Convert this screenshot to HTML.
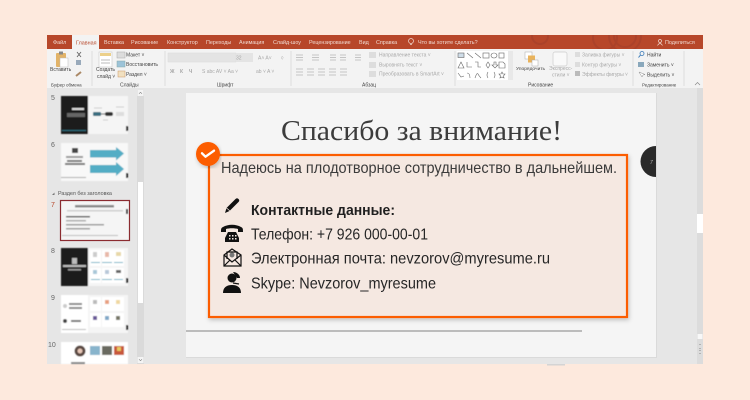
<!DOCTYPE html>
<html><head><meta charset="utf-8"><style>
html,body{margin:0;padding:0;background:#fde9dd;width:750px;height:400px;overflow:hidden}
svg{display:block}
text{font-family:"Liberation Sans","DejaVu Sans",sans-serif}
.r{font-size:5px;fill:#444}
.g{font-size:5px;fill:#a8a8a8}
.t{font-size:5.4px;fill:#f0d9d0}
.m{font-size:15.6px;fill:#262626}
</style></head><body>
<svg width="750" height="400" viewBox="0 0 750 400" xmlns="http://www.w3.org/2000/svg">
<defs><filter id="s" x="-5%" y="-5%" width="110%" height="115%"><feDropShadow dx="1" dy="2" stdDeviation="2" flood-color="#000" flood-opacity=".22"/></filter>
<filter id="bl"><feGaussianBlur stdDeviation=".35"/></filter>
<filter id="bt"><feGaussianBlur stdDeviation=".5"/></filter>
<clipPath id="cb"><rect x="47" y="35" width="656" height="14"/></clipPath></defs>
<rect width="750" height="400" fill="#fde9dd"/>
<!-- window -->
<rect x="47" y="35" width="656" height="329" fill="#e6e6e6"/>
<rect x="47" y="35" width="656" height="14" fill="#b7472a"/>
<g clip-path="url(#cb)" fill="none" stroke="#a8412a" stroke-width="2" opacity=".75"><circle cx="605" cy="38" r="12"/><circle cx="625" cy="36" r="16"/><circle cx="625" cy="36" r="11"/><circle cx="540" cy="36" r="8"/></g>
<rect x="47" y="49" width="656" height="39" fill="#f3f3f3"/>
<rect x="72" y="35" width="27" height="15" fill="#f3f3f3"/>
<g filter="url(#bl)">
<text class="t" x="53" y="44">Файл</text>
<text x="76" y="44.500" font-size="5.400" fill="#b7472a">Главная</text>
<text class="t" x="104" y="44">Вставка</text>
<text class="t" x="131" y="44">Рисование</text>
<text class="t" x="167" y="44">Конструктор</text>
<text class="t" x="206" y="44">Переходы</text>
<text class="t" x="239" y="44">Анимация</text>
<text class="t" x="273" y="44">Слайд-шоу</text>
<text class="t" x="309" y="44">Рецензирование</text>
<text class="t" x="359" y="44">Вид</text>
<text class="t" x="376" y="44">Справка</text>
<text class="t" x="418" y="44">Что вы хотите сделать?</text>
<text class="t" x="665" y="44">Поделиться</text>
<g fill="none" stroke="#f0d9d0" stroke-width=".7"><circle cx="411" cy="41" r="2.500"/><path d="M410 44.500h2"/><circle cx="660" cy="41" r="1.500"/><path d="M657.500 45.500q2.500-4 5 0"/></g>
<!-- ribbon separators -->
<g stroke="#d8d8d8" stroke-width=".8"><path d="M92 51v35M165 51v35M291 51v35M455 51v35M633 51v35M684 51v35"/></g>
<!-- clipboard -->
<rect x="56" y="53" width="10" height="14" rx="1" fill="#e2b368"/><rect x="60" y="58" width="8" height="9" fill="#fff" stroke="#bbb" stroke-width=".5"/><rect x="59" y="51.500" width="4" height="3" fill="#888"/>
<text class="r" x="50" y="71">Вставить</text>
<path d="M77 52l4 5M81 52l-4 5" stroke="#666" stroke-width=".9"/><rect x="76" y="60" width="5" height="5" fill="#9ab"/><path d="M76 76l5-4" stroke="#a86" stroke-width="2"/>
<text class="r" x="51" y="86.500" style="font-size:4.500px">Буфер обмена</text>
<!-- slides -->
<rect x="99" y="52" width="13" height="15" fill="#fff" stroke="#c8c8c8" stroke-width=".6"/><rect x="100" y="53" width="11" height="3" fill="#ecd08a"/><path d="M101 60h9M101 63h9" stroke="#bbb"/>
<text class="r" x="96" y="71">Создать</text><text class="r" x="97" y="78">слайд ˅</text>
<rect x="117" y="52" width="8" height="6" fill="#dcdcdc" stroke="#aaa" stroke-width=".5"/><text class="r" x="126" y="56.500">Макет ˅</text>
<rect x="117" y="61" width="8" height="6" fill="#9cc3d8" stroke="#8aa" stroke-width=".5"/><text class="r" x="126" y="66">Восстановить</text>
<rect x="118" y="71" width="7" height="6" fill="#f1e0c0" stroke="#c96" stroke-width=".5"/><text class="r" x="126" y="76">Раздел ˅</text>
<text class="r" x="120" y="86.500">Слайды</text>
<!-- font -->
<rect x="168" y="53" width="68" height="9" fill="#e4e4e4" stroke="#dadada" stroke-width=".5"/><rect x="236" y="53" width="17" height="9" fill="#e4e4e4"/>
<text class="g" x="236" y="59.500">32</text>
<text class="g" x="258" y="59.500">A˄ A˅</text><text class="g" x="281" y="59.500">◊</text>
<text class="g" x="170" y="73" font-weight="bold" letter-spacing="5.500">ЖКЧ</text><text class="g" x="202" y="73">S abc AV ˅ Aa ˅</text><text class="g" x="256" y="73">ab ˅  A ˅</text>
<text class="r" x="217" y="86.500">Шрифт</text>
<!-- paragraph -->
<g stroke="#c4c4c4" stroke-width=".9"><path d="M296 55h7M296 57.500h7M296 60h7M312 55h7M312 57.500h7M312 60h7M330 55h6M330 57.500h6M330 60h6M340 55h6M340 57.500h6M340 60h6M355 55h6M355 57.500h6M355 60h6M296 69h7M296 72h7M296 75h7M307 69h7M307 72h7M307 75h7M318 69h7M318 72h7M318 75h7M329 69h7M329 72h7M329 75h7M340 69h7M340 72h7M340 75h7"/></g>
<text class="r" x="362" y="86.500">Абзац</text>
<text class="g" x="379" y="56.500">Направление текста ˅</text>
<text class="g" x="379" y="66.500">Выровнять текст ˅</text>
<text class="g" x="379" y="75.500">Преобразовать в SmartArt ˅</text>
<rect x="369" y="52" width="7" height="6" fill="#ddd"/><rect x="369" y="62" width="7" height="6" fill="#ddd"/><rect x="369" y="71" width="7" height="6" fill="#ddd"/>
<!-- shapes -->
<rect x="457" y="51" width="51" height="29" fill="#fff"/><rect x="508" y="51" width="5" height="29" fill="#e8e8e8"/>
<g fill="none" stroke="#666" stroke-width=".6">
<rect x="458" y="53" width="6" height="4.500" fill="#cfdde8"/><path d="M467 53l6 5M475 53l6 5"/><rect x="483" y="53" width="6" height="5"/><ellipse cx="494" cy="55.500" rx="3" ry="2.500"/><rect x="499" y="53" width="5" height="5"/>
<path d="M458 68l3-6 3 6zM467 62v5h5M475 62h3v5h3M486 65l2-3 2 3-2 3zM494 62v3h-2l3 3 3-3h-2v-3zM499 62h4l2 2v4h-6z"/>
<path d="M458 73l3 4 3-1M467 73q3 0 3 5M475 78q2-6 3-4t3 4M488 72q-2 3 0 6M494 72q2 3 0 6M502 72l1 2h2l-1.500 2 .5 2-2-1-2 1 .5-2-1.500-2h2z"/></g>
<text x="516" y="70" font-size="4.900" fill="#444">Упорядочить</text>
<rect x="525" y="52" width="7" height="7" fill="#fff" stroke="#aaa" stroke-width=".5"/><rect x="528" y="55.500" width="7" height="7" fill="#e9b35c"/><rect x="532" y="60" width="6" height="6" fill="#fff" stroke="#aaa" stroke-width=".5"/>
<text class="g" x="549" y="70">Экспресс-</text><text class="g" x="552" y="76.500">стили ˅</text>
<rect x="553" y="52" width="14" height="14" rx="2" fill="#f9f9f9" stroke="#ccc" stroke-width=".7"/>
<text class="g" x="582" y="56.500">Заливка фигуры ˅</text><text class="g" x="582" y="66.500">Контур фигуры ˅</text><text class="g" x="582" y="76">Эффекты фигуры ˅</text>
<rect x="575" y="52" width="5" height="5" fill="#ddd"/><rect x="575" y="62" width="5" height="5" fill="#ddd"/><rect x="575" y="71" width="5" height="5" fill="#bbb"/>
<text class="r" x="528" y="86.500">Рисование</text>
<!-- edit -->
<circle cx="642" cy="53.500" r="2" fill="none" stroke="#3a7ab8" stroke-width=".8"/><path d="M640.500 55l-2 2.500" stroke="#3a7ab8"/>
<text class="r" x="647" y="56.500">Найти</text>
<rect x="638" y="62" width="6" height="5" fill="#8aa8bc"/><text class="r" x="647" y="66.500">Заменить ˅</text>
<path d="M639 72l3 5 1-2 2-.5z" fill="#fff" stroke="#888" stroke-width=".5"/><text class="r" x="647" y="76.500">Выделить ˅</text>
<text class="r" x="642" y="86.500" style="font-size:4.500px">Редактирование</text>
<path d="M695 85l2.500-2.500 2.500 2.500" stroke="#888" fill="none" stroke-width=".7"/>
</g>
<!-- side panel -->
<rect x="137" y="90" width="7" height="274" fill="#dadada"/>
<rect x="138" y="182" width="5" height="121" fill="#fff"/>
<rect x="137.500" y="90" width="6" height="6" fill="#f4f4f4"/><rect x="137.500" y="357" width="6" height="6" fill="#f4f4f4"/>
<path d="M139 94l1.500-2 1.500 2M139 359l1.500 2 1.500-2" stroke="#666" stroke-width=".5" fill="none"/>
<g font-size="7" fill="#666" filter="url(#bl)">
<text x="51" y="100">5</text><text x="51" y="147">6</text><text x="51" y="207" fill="#b7472a">7</text><text x="51" y="253">8</text><text x="51" y="300">9</text><text x="48" y="347">10</text>
<text x="58" y="195" font-size="5.400" fill="#555">Раздел без заголовка</text>
<path d="M52 195l2.500-2.500v2.500z" fill="#777"/></g>
<g filter="url(#bt)">
<!-- thumb 5 -->
<rect x="61" y="96" width="67" height="38" fill="#f5f5f5"/><rect x="61" y="96" width="27" height="38" fill="#1e1e1e"/>
<rect x="72" y="108" width="12" height="2" fill="#ddd"/><rect x="67" y="113" width="18" height="4" fill="#666"/><rect x="62" y="130" width="24" height="1" fill="#2d6e80"/>
<rect x="93" y="112" width="8" height="4" rx="1" fill="#3b6e80"/><rect x="105" y="112" width="8" height="4" rx="2" fill="#333"/><rect x="116" y="112" width="8" height="4" fill="#ddd"/><path d="M101 114h4" stroke="#555"/><path d="M94 108h8M108 120h-5M116 107h8" stroke="#ccc"/>
<rect x="126" y="126" width="2" height="5" fill="#222"/>
<!-- thumb 6 -->
<rect x="61" y="143" width="67" height="38" fill="#f8f8f8"/>
<rect x="72" y="148" width="6" height="5" fill="#444"/><rect x="66" y="156" width="17" height="2" fill="#999"/><rect x="67" y="160" width="15" height="2" fill="#777"/><rect x="65" y="163" width="20" height="2" fill="#777"/>
<path d="M90 150h26v-3l8 6.500-8 7v-3h-26z" fill="#53adc5"/><path d="M90 165h26v-3l8 7-8 7v-3h-26z" fill="#53adc5"/>
<rect x="61" y="177" width="25" height="1" fill="#aaa"/><rect x="126" y="173" width="2" height="5" fill="#222"/>
<!-- thumb 7 -->
<rect x="61" y="201" width="68" height="39" fill="#f5f5f5"/>
<rect x="75" y="205" width="39" height="2.500" fill="#888"/><rect x="67" y="210" width="56" height="1.500" fill="#ccc"/>
<rect x="66" y="216" width="24" height="1.500" fill="#555"/><rect x="66" y="220" width="20" height="1.500" fill="#aaa"/><rect x="66" y="224" width="38" height="1.500" fill="#999"/><rect x="66" y="228" width="24" height="1.500" fill="#999"/>
<rect x="126" y="209" width="2" height="5" fill="#222"/><rect x="62" y="235" width="56" height="1" fill="#bbb"/>
<!-- thumb 8 -->
<rect x="61" y="248" width="67" height="38" fill="#f5f5f5"/><rect x="61" y="248" width="27" height="38" fill="#1e1e1e"/>
<rect x="72" y="258" width="5" height="6" fill="#bbb"/><rect x="63" y="265" width="23" height="2" fill="#bbb"/><rect x="68" y="269" width="13" height="1.500" fill="#999"/>
<g fill="#fff"><rect x="90" y="250" width="11" height="16"/><rect x="102" y="250" width="11" height="16"/><rect x="113" y="250" width="11" height="16"/><rect x="90" y="268" width="11" height="15"/><rect x="102" y="268" width="11" height="15"/><rect x="113" y="268" width="11" height="15"/></g>
<g fill="#6bb3c8"><rect x="91" y="262" width="9" height="1"/><rect x="102" y="262" width="10" height="1"/><rect x="114" y="262" width="9" height="1"/><rect x="91" y="279" width="9" height="1"/><rect x="102" y="279" width="10" height="1"/><rect x="114" y="279" width="9" height="1"/></g>
<rect x="93" y="252" width="4" height="5" fill="#ccc"/><rect x="105" y="252" width="4" height="5" fill="#e8b8a8"/><rect x="116" y="252" width="5" height="4" fill="#e8d8a8"/><rect x="93" y="270" width="4" height="4" fill="#a8c8d8"/><rect x="105" y="270" width="4" height="4" fill="#b8c8d8"/><rect x="116" y="270" width="5" height="3" fill="#666"/>
<rect x="126" y="278" width="2" height="5" fill="#222"/>
<!-- thumb 9 -->
<rect x="61" y="295" width="67" height="38" fill="#f5f5f5"/><rect x="61" y="295" width="27" height="38" fill="#fff"/>
<circle cx="65" cy="306" r="2" fill="#ccc"/><circle cx="65" cy="321" r="2" fill="#444"/><rect x="69" y="303" width="13" height="2" fill="#888"/><rect x="69" y="307" width="13" height="2" fill="#888"/><rect x="71" y="320" width="10" height="2" fill="#777"/>
<rect x="62" y="329" width="24" height="1" fill="#bbb"/>
<g fill="#fff"><rect x="90" y="297" width="11" height="14"/><rect x="102" y="297" width="11" height="14"/><rect x="113" y="297" width="11" height="14"/><rect x="90" y="313" width="11" height="14"/><rect x="102" y="313" width="11" height="14"/><rect x="113" y="313" width="11" height="14"/></g>
<rect x="93" y="300" width="4" height="4" fill="#bbb"/><rect x="105" y="300" width="4" height="4" fill="#e8a080"/><rect x="116" y="300" width="4" height="4" fill="#f0d8a0"/><rect x="93" y="316" width="4" height="4" fill="#6a5a9a"/><rect x="105" y="316" width="4" height="4" fill="#80a8c8"/><rect x="116" y="316" width="4" height="4" fill="#776"/>
<rect x="126" y="325" width="2" height="5" fill="#222"/>
<!-- thumb 10 -->
<rect x="61" y="342" width="67" height="22" fill="#fff"/><circle cx="80" cy="351" r="5.500" fill="#5a4a42"/><circle cx="80" cy="351" r="2.500" fill="#e8c8b8"/>
<rect x="90" y="346" width="10" height="9" fill="#88b4cc"/><rect x="102" y="346" width="10" height="9" fill="#6a6a60"/><rect x="114" y="346" width="10" height="9" fill="#c8583a"/><rect x="117" y="347" width="4" height="4" fill="#e8c860"/>
<rect x="71" y="362" width="14" height="2" fill="#888"/>
</g>
<rect x="60.500" y="200.500" width="69" height="40" fill="none" stroke="#8b2b30" stroke-width="1.200"/>
<!-- main area -->
<rect x="697" y="88" width="6" height="276" fill="#dcdcdc"/>
<rect x="697" y="214" width="6" height="19" fill="#fff"/>
<rect x="697.500" y="334" width="5" height="5" fill="#f8f8f8"/>
<path d="M699 345l1-1 1 1M699 349l1-1 1 1M699 350l1 1 1-1M699 353l1 1 1-1" stroke="#888" fill="none" stroke-width=".5"/>
<rect x="547" y="364" width="18" height="1.500" fill="#d4d4d4"/>
<!-- slide -->
<rect x="186" y="93" width="470" height="264" fill="#f5f5f5"/>
<path d="M186 357.500h470M656.500 93v265" stroke="#dadada" stroke-width="1"/>
<text x="281" y="140" textLength="281" lengthAdjust="spacingAndGlyphs" style="font-size:29px;font-family:'Liberation Serif','DejaVu Serif',serif" fill="#3c3c3c">Спасибо за внимание!</text>
<path d="M656 146a15.500 15.500 0 0 0 0 31z" fill="#2a2a2a"/><text x="650" y="164" font-size="5" fill="#bbb" font-style="italic">7</text>
<path d="M186 331h396" stroke="#a9a9a9" stroke-width="1.400"/>
<!-- box -->
<rect x="209" y="155" width="418" height="162" fill="#f5e8e1" stroke="#fc5d06" stroke-width="2.200" filter="url(#s)"/>
<circle cx="208" cy="154" r="12" fill="#fc5d06" filter="url(#s)"/>
<path d="M202 153.300l3.500 3.400 8.500-6" fill="none" stroke="#fff" stroke-width="2.400" stroke-linecap="round" stroke-linejoin="round"/>
<text class="m" x="221" y="173" textLength="396" lengthAdjust="spacingAndGlyphs" style="fill:#3b3b3b;font-size:16px">Надеюсь на плодотворное сотрудничество в дальнейшем.</text>
<text class="m" x="251" y="215" textLength="144" lengthAdjust="spacingAndGlyphs" style="font-weight:bold;font-size:15px;fill:#1f1f1f">Контактные данные:</text>
<text class="m" x="251" y="239.500" textLength="177" lengthAdjust="spacingAndGlyphs">Телефон: +7 926 000-00-01</text>
<text class="m" x="251" y="263.500" textLength="299" lengthAdjust="spacingAndGlyphs">Электронная почта: nevzorov@myresume.ru</text>
<text class="m" x="251" y="288.500" textLength="185" lengthAdjust="spacingAndGlyphs">Skype: Nevzorov_myresume</text>
<!-- icons -->
<path d="M225 213l1.500-5 9-9c1-1 2-1 3 0s1 2 0 3l-9 9z" fill="#111"/><path d="M226.500 208l3.500 3" stroke="#f5e8e1" stroke-width=".7"/>
<path d="M222 233c0-3 0-4 2-5 5-3 13-3 18 0 2 1 2 2 2 5h-5v-3c-3-1-9-1-12 0v3z" fill="#111" transform="translate(-1 -1)"/><path d="M228 232h8l3 6v4h-14v-4z" fill="#111"/><g fill="#f5e8e1"><rect x="229" y="235" width="1.500" height="1.500"/><rect x="232" y="235" width="1.500" height="1.500"/><rect x="235" y="235" width="1.500" height="1.500"/><rect x="229" y="238" width="1.500" height="1.500"/><rect x="232" y="238" width="1.500" height="1.500"/><rect x="235" y="238" width="1.500" height="1.500"/></g>
<g fill="none" stroke="#111" stroke-width="1.200"><path d="M224 255l8-6 9 6v11h-17z" fill="#f5e8e1"/><path d="M227 259v-7h10v7"/><path d="M224 255l8 7 9-7M224 266l6-6M241 266l-6-6"/></g><circle cx="232" cy="255" r="2.500" fill="#777"/>
<circle cx="232" cy="278" r="4.500" fill="#111"/><path d="M223 293c0-5 3-8 9-8s9 3 9 8z" fill="#111"/><path d="M233 272c4 0 7 3 7 6h-3z" fill="#111"/><path d="M233 283l6 1" stroke="#111" stroke-width="1.200"/>
</svg>
</body></html>
